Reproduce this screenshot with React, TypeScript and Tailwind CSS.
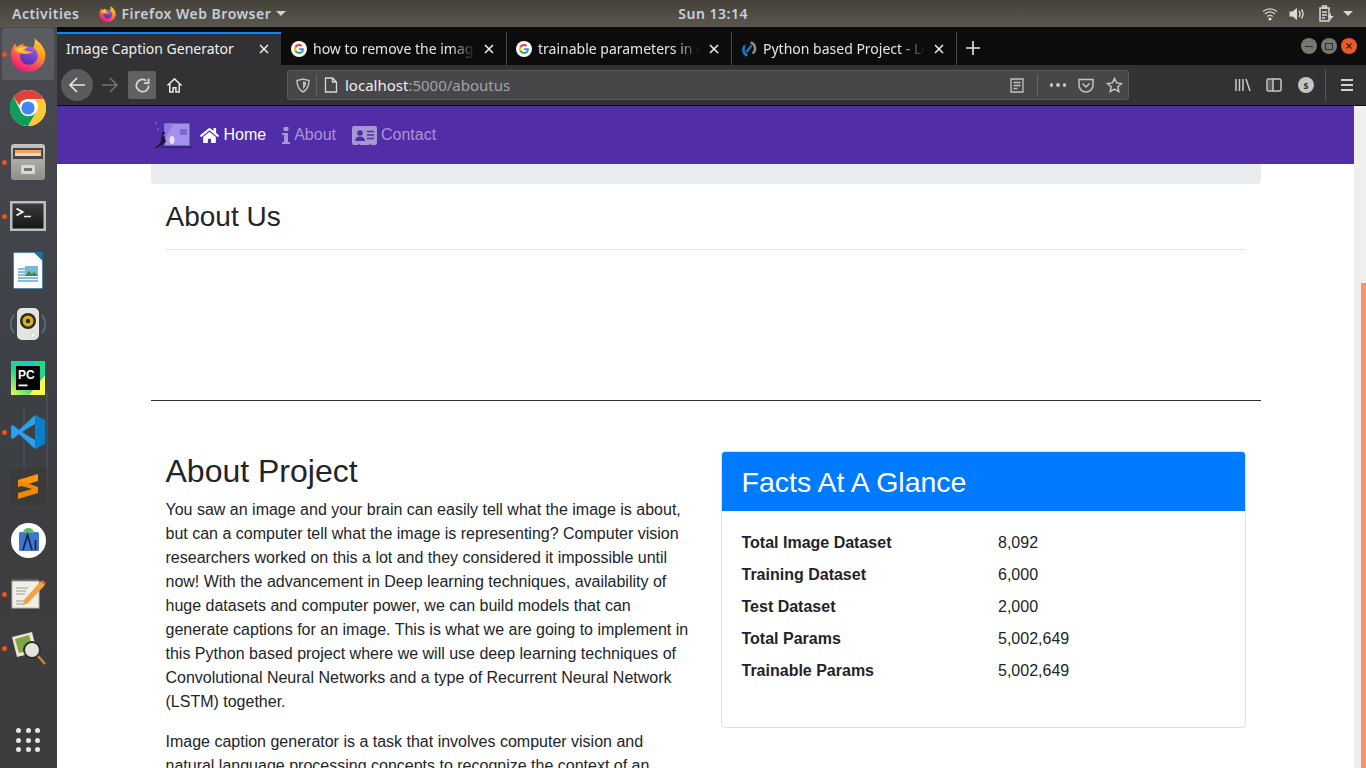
import type { ReactNode } from "react";
import { FaHome } from "react-icons/fa";

function FirefoxIcon({ size }: { size: number }) {
  const id = `ff${size}`;
  return (
    <svg width={size} height={size} viewBox="0 0 40 40">
      <defs>
        <linearGradient id={id} x1="0.8" y1="0" x2="0.3" y2="1">
          <stop offset="0" stopColor="#ffe03a" />
          <stop offset="0.4" stopColor="#ff9a1e" />
          <stop offset="0.75" stopColor="#ff3f5f" />
          <stop offset="1" stopColor="#e31587" />
        </linearGradient>
        <linearGradient id={`${id}g`} x1="0.7" y1="0" x2="0.3" y2="1">
          <stop offset="0" stopColor="#9a5cf0" />
          <stop offset="1" stopColor="#4f2ab0" />
        </linearGradient>
      </defs>
      <path
        d="M27 0c0 4 5 6 8 10 4 5 5 10 4 15-2 9-10 15-19 15C9 40 1 32 1 21c0-5 2-10 5-13 0 2 1 3 2 4 2-2 5-3 8-3-1 1-2 2-2 3 4-1 8 0 11 2 3-4 3-9 2-14z"
        fill={`url(#${id})`}
      />
      <circle cx="21" cy="22" r="10" fill={`url(#${id}g)`} />
      <path d="M4 15c5-4 11-5 16-3l-4 3c3 2 7 3 10 2-2 2-5 3-8 3-5 0-10-1-14-5z" fill="#ffa52a" />
      <path d="M7 15c3-2 7-3 10-2l-4 3c2 1 3 2 5 2-4 1-8 0-11-3z" fill="#ffd04a" />
    </svg>
  );
}

function ChromeIcon({ size }: { size: number }) {
  return (
    <svg width={size} height={size} viewBox="0 0 36 36">
      <circle cx="18" cy="18" r="18" fill="#fff" />
      <path d="M18 0a18 18 0 0 1 15.6 9H18a9 9 0 0 0-8.6 6.4L3.6 7A18 18 0 0 1 18 0z" fill="#db4437" />
      <path d="M33.6 9A18 18 0 0 1 18 36l7.8-13.5A9 9 0 0 0 25 10z" fill="#fcc934" />
      <path d="M3.6 7A18 18 0 0 0 18 36l7.8-13.5a9 9 0 0 1-15.6-2.4z" fill="#0f9d58" />
      <circle cx="18" cy="18" r="8.2" fill="#fff" />
      <circle cx="18" cy="18" r="6.6" fill="#4285f4" />
    </svg>
  );
}

function GoogleIcon() {
  return (
    <svg width="16" height="16" viewBox="0 0 16 16">
      <circle cx="8" cy="8" r="8" fill="#fff" />
      <path d="M12.9 8.2c0-.4 0-.7-.1-1H8v1.9h2.8c-.1.7-.5 1.2-1 1.6l1.6 1.2c.9-.9 1.5-2.2 1.5-3.7z" fill="#4285f4" />
      <path d="M8 13c1.3 0 2.5-.4 3.4-1.2l-1.6-1.2c-.5.3-1.1.5-1.8.5-1.3 0-2.4-.9-2.8-2L3.5 10.3A5 5 0 0 0 8 13z" fill="#34a853" />
      <path d="M5.2 9.1a3 3 0 0 1 0-2.1L3.5 5.7a5 5 0 0 0 0 4.5z" fill="#fbbc05" />
      <path d="M8 5c.7 0 1.4.3 1.9.7l1.4-1.4A5 5 0 0 0 3.5 5.7L5.2 7c.4-1.1 1.5-2 2.8-2z" fill="#ea4335" />
    </svg>
  );
}

function ProjectFavicon() {
  return (
    <svg width="16" height="16" viewBox="0 0 16 16" fill="none">
      <path d="M9.5 1.5a6.2 6.2 0 0 1 2 11" stroke="#8a8a8a" strokeWidth="2.6" />
      <path d="M6.5 14.5A6.2 6.2 0 0 1 4 4.5" stroke="#1b76c4" strokeWidth="2.6" />
      <path d="M10.5 4.5 5.5 11" stroke="#1b76c4" strokeWidth="2.4" />
    </svg>
  );
}

function Tab({ title, icon, active, wide }: { title: string; icon?: ReactNode; active?: boolean; wide?: boolean }) {
  let box = "flex h-[33px] w-[225px] items-center border-r border-[#4a4a4c] pl-[9px] pr-[11px] text-[#e4e4e4]";
  if (wide) box = "flex h-[33px] w-[226px] items-center border-r border-[#4a4a4c] pl-[10px] pr-[11px] text-[#e4e4e4]";
  if (active) box = "flex h-[33px] w-[224px] items-center border-t-2 border-[#0a84ff] bg-[#323234] pb-[2px] pl-[9px] pr-[11px] text-[#f0f0f0]";
  return (
    <div className={box}>
      {icon && <span className="mr-[6px] shrink-0">{icon}</span>}
      <span
        className={
          active
            ? "flex-1 overflow-hidden whitespace-nowrap text-[14px]"
            : "flex-1 overflow-hidden whitespace-nowrap text-[14px] [mask-image:linear-gradient(to_left,transparent,black_24px)]"
        }
      >
        {title}
      </span>
      <svg width="12" height="12" viewBox="0 0 12 12" className="ml-[8px] shrink-0">
        <path d="M2 2l8 8M10 2l-8 8" stroke="#f2f2f2" strokeWidth="1.5" />
      </svg>
    </div>
  );
}

function TopBar() {
  return (
    <div className="flex h-[27px] shrink-0 items-center bg-gradient-to-b from-[#45423b] to-[#5a574f] font-['Noto_Sans',sans-serif] text-[14px] font-semibold tracking-[0.5px] text-[#c6d0d8]">
      <span className="ml-[12px]">Activities</span>
      <span className="ml-[20px] mr-[5px]">
        <FirefoxIcon size={17} />
      </span>
      <span>Firefox Web Browser</span>
      <svg width="10" height="6" viewBox="0 0 10 6" className="ml-[5px]">
        <path d="M0 0h10L5 5z" fill="#d0d0d0" />
      </svg>
      <span className="ml-[392px]">Sun 13:14</span>
      <div className="ml-auto mr-[15px] flex items-center">
        <svg width="16" height="14" viewBox="0 0 16 14" fill="none" stroke="#cfcfcf" strokeWidth="1.3">
          <path d="M1 4.5C5 1 11 1 15 4.5M3 7c3-2.5 7-2.5 10 0M5.2 9.5c1.6-1.3 4-1.3 5.6 0" />
          <circle cx="8" cy="12" r="1.5" fill="#e8e8e8" stroke="none" />
        </svg>
        <svg width="16" height="14" viewBox="0 0 16 14" fill="none" className="ml-[11px]">
          <path d="M0.5 4.5h3L8 1v12L3.5 9.5h-3z" fill="#d8d8d8" />
          <path d="M10 4c1.2 1.7 1.2 4.3 0 6M12.5 2.5c1.9 2.7 1.9 6.3 0 9" stroke="#d8d8d8" strokeWidth="1.4" />
        </svg>
        <svg width="15" height="17" viewBox="0 0 15 17" fill="none" className="ml-[14px]">
          <path d="M1 3h9v13H1z" stroke="#d8d8d8" strokeWidth="1.5" />
          <path d="M3.5 1h4v2h-4zM3 7h5M3 10h5M3 13h3" stroke="#d8d8d8" strokeWidth="1.3" />
          <path d="M12 8l-3 4.5h2.5L10.5 16l4-5h-2.5z" fill="#e0e0e0" />
        </svg>
        <svg width="10" height="6" viewBox="0 0 10 6" className="ml-[9px] -mr-[2px]">
          <path d="M0 0h10L5 5z" fill="#d8d8d8" />
        </svg>
      </div>
    </div>
  );
}

function TabStrip() {
  return (
    <div className="flex h-[38px] shrink-0 items-end bg-[#0c0c0d] font-['Noto_Sans',sans-serif]">
      <Tab title="Image Caption Generator" active />
      <Tab title="how to remove the image" icon={<GoogleIcon />} wide />
      <Tab title="trainable parameters in c" icon={<GoogleIcon />} />
      <Tab title="Python based Project - Le" icon={<ProjectFavicon />} />
      <svg width="16" height="16" viewBox="0 0 16 16" className="mb-[9px] ml-[8px]">
        <path d="M8 1v14M1 8h14" stroke="#e8e8e8" strokeWidth="1.6" />
      </svg>
      <div className="mb-[11px] ml-auto mr-[9px] flex items-center gap-[4px]">
        <div className="flex h-[16px] w-[16px] items-center justify-center rounded-full bg-[#77776f]">
          <div className="h-px w-[8px] bg-[#2e2e2c]" />
        </div>
        <div className="flex h-[16px] w-[16px] items-center justify-center rounded-full bg-[#77776f]">
          <div className="h-[7px] w-[8px] border border-[#2e2e2c]" />
        </div>
        <div className="flex h-[16px] w-[16px] items-center justify-center rounded-full bg-[#e85a2a]">
          <svg width="8" height="8" viewBox="0 0 8 8">
            <path d="M1.5 1.5l5 5M6.5 1.5l-5 5" stroke="#4a1c0c" strokeWidth="1.2" />
          </svg>
        </div>
      </div>
    </div>
  );
}

function AddressField() {
  return (
    <div className="ml-[104px] flex h-[30px] w-[842px] shrink-0 items-center rounded-[3px] border border-[#59595b] bg-[#474749]">
      <div className="ml-[7px] flex w-[16px] justify-center">
        <svg width="14" height="15" viewBox="0 0 14 15" fill="none" stroke="#bdbdbe" strokeWidth="1.5">
          <path d="M1 2.5 7 1l6 1.5c0 5-1.5 9-6 11.5C2.5 11.5 1 7.5 1 2.5z" />
          <path d="M7 3v8c2-1.5 3-3.5 3.3-6.5z" fill="#bdbdbe" stroke="none" />
        </svg>
      </div>
      <div className="ml-[5px] h-[22px] w-px bg-[#656567]" />
      <svg width="14" height="16" viewBox="0 0 14 16" fill="none" stroke="#d8d8d8" strokeWidth="1.3" className="ml-[7px]">
        <path d="M1.5 1h7l4 4v10h-11zM8.5 1v4h4" />
      </svg>
      <span className="ml-[7px] text-[15px] text-[#eeeeee]">
        localhost<span className="text-[#a3a3a4]">:5000/aboutus</span>
      </span>
      <div className="ml-auto flex items-center">
        <svg width="14" height="15" viewBox="0 0 14 15" fill="none" stroke="#c4c4c5" strokeWidth="1.3">
          <path d="M1 1h12v13H1zM3.5 4.5h7M3.5 7.5h7M3.5 10.5h4" />
        </svg>
        <div className="ml-[13px] h-[22px] w-px bg-[#656567]" />
        <div className="ml-[12px] flex gap-[3px]">
          <div className="h-[3.5px] w-[3.5px] rounded-full bg-[#c4c4c5]" />
          <div className="h-[3.5px] w-[3.5px] rounded-full bg-[#c4c4c5]" />
          <div className="h-[3.5px] w-[3.5px] rounded-full bg-[#c4c4c5]" />
        </div>
        <svg width="16" height="15" viewBox="0 0 16 15" fill="none" stroke="#c4c4c5" strokeWidth="1.5" className="ml-[12px]">
          <path d="M1 1.5h14V7a7 7 0 0 1-14 0zM4.5 5.5 8 9l3.5-3.5" />
        </svg>
        <svg width="17" height="16" viewBox="0 0 17 16" fill="none" stroke="#c4c4c5" strokeWidth="1.5" className="ml-[12px] mr-[5px]">
          <path d="M8.5 1.5l2.1 4.4 4.9.6-3.600 3.300.9 4.800-4.300-2.400-4.300 2.400.9-4.800L1.500 6.500l4.900-.6z" />
        </svg>
      </div>
    </div>
  );
}

function BrowserActions() {
  return (
    <div className="ml-[106px] flex items-center">
      <svg width="16" height="14" viewBox="0 0 16 14" fill="none" stroke="#c9c9ca" strokeWidth="1.5">
        <path d="M1 1v12M4.5 1v12M8 1v12M11 1l4 12" />
      </svg>
      <svg width="16" height="14" viewBox="0 0 16 14" fill="none" stroke="#c9c9ca" strokeWidth="1.5" className="ml-[15px]">
        <rect x="1" y="1" width="14" height="12" rx="1.5" />
        <path d="M7 1v12" />
        <path d="M2 2h5v10H2z" fill="#c9c9ca" fillOpacity="0.25" stroke="none" />
      </svg>
      <div className="ml-[16px] flex h-[16px] w-[16px] items-center justify-center rounded-full bg-[#c4c4c5] text-[10px] font-bold text-[#323234]">
        s
      </div>
      <div className="ml-[11px] h-[32px] w-px bg-[#59595b]" />
      <div className="ml-[15px] flex flex-col gap-[3px]">
        <div className="h-[2px] w-[12px] bg-[#d0d0d0]" />
        <div className="h-[2px] w-[12px] bg-[#d0d0d0]" />
        <div className="h-[2px] w-[12px] bg-[#d0d0d0]" />
      </div>
    </div>
  );
}

function Toolbar() {
  return (
    <div className="flex h-[41px] shrink-0 items-center border-b border-[#0c0c0d] bg-[#323234] pl-[4px] font-['Noto_Sans',sans-serif]">
      <div className="flex h-[32px] w-[32px] items-center justify-center rounded-full bg-[#5b5b5d]">
        <svg width="18" height="18" viewBox="0 0 18 18" fill="none" stroke="#e6e6e6" strokeWidth="1.7">
          <path d="M17 9H2M9 2 2 9l7 7" />
        </svg>
      </div>
      <div className="ml-[3px] flex h-[28px] w-[28px] items-center justify-center">
        <svg width="18" height="18" viewBox="0 0 18 18" fill="none" stroke="#747476" strokeWidth="1.5">
          <path d="M1 9h15M9 2l7 7-7 7" />
        </svg>
      </div>
      <div className="ml-[4px] flex h-[28px] w-[28px] items-center justify-center rounded-[2px] bg-[#616163]">
        <svg width="17" height="17" viewBox="0 0 18 18" fill="none" stroke="#d8d8d8" strokeWidth="1.8">
          <path d="M15.5 9A6.5 6.5 0 1 1 13 3.9" />
          <path d="M15.5 1.5V6.5H10.5" />
        </svg>
      </div>
      <div className="ml-[9px] flex w-[18px] justify-center">
        <svg width="17" height="17" viewBox="0 0 18 18" fill="none" stroke="#e6e6e6" strokeWidth="1.6">
          <path d="M1.5 9 9 2l7.5 7M4 7.5V16h3.5v-4.5h3V16H14V7.5" />
        </svg>
      </div>
      <AddressField />
      <BrowserActions />
    </div>
  );
}

function DockItem({ children, dot, active }: { children: ReactNode; dot?: boolean; active?: boolean }) {
  return (
    <div
      className={
        active
          ? "relative mx-[2px] flex h-[52px] w-[52px] items-center justify-center rounded-[3px] bg-[#5a5c62]"
          : "relative mx-[2px] flex h-[52px] w-[52px] items-center justify-center"
      }
    >
      {dot && <div className="absolute left-[0px] top-[24px] h-[5px] w-[5px] rounded-full bg-[#e95420]" />}
      {children}
    </div>
  );
}

function Dock() {
  return (
    <div className="relative flex w-[57px] shrink-0 flex-col items-start gap-[2px] bg-gradient-to-b from-[#494a50] via-[#3c4045] via-50% to-[#3e3b3b] pt-[1px]">
      {/* faint wallpaper masts behind the dock */}
      <svg width="57" height="130" viewBox="0 0 57 130" className="absolute left-0 top-[360px]" fill="none">
        <path d="M24 20V100M47 5V100" stroke="#55565a" strokeWidth="1" />
      </svg>
      <DockItem dot active>
        <FirefoxIcon size={36} />
      </DockItem>
      <DockItem>
        <ChromeIcon size={36} />
      </DockItem>
      <DockItem dot>
        <svg width="36" height="38" viewBox="0 0 36 38">
          <defs>
            <linearGradient id="cab" x1="0" y1="0" x2="0" y2="1">
              <stop offset="0" stopColor="#c4c3bd" />
              <stop offset="1" stopColor="#8f8e89" />
            </linearGradient>
          </defs>
          <rect x="1" y="1" width="34" height="36" rx="3" fill="url(#cab)" />
          <rect x="3" y="5" width="30" height="11" fill="#4a4845" />
          <rect x="5" y="7" width="26" height="3" fill="#f0a35c" />
          <rect x="5" y="10" width="26" height="3" fill="#e8dcc8" />
          <rect x="11" y="22" width="14" height="9" rx="1" fill="#d8d7d2" />
          <rect x="14" y="25" width="8" height="3" fill="#77756f" />
        </svg>
      </DockItem>
      <DockItem dot>
        <svg width="36" height="30" viewBox="0 0 36 30" fill="none">
          <defs>
            <linearGradient id="term" x1="0" y1="0" x2="0" y2="1">
              <stop offset="0" stopColor="#3c3c3c" />
              <stop offset="1" stopColor="#161616" />
            </linearGradient>
          </defs>
          <rect x="0" y="0" width="36" height="30" fill="#bdbdbb" />
          <rect x="2.5" y="2.5" width="31" height="25" fill="url(#term)" />
          <path d="M6.5 7.5l6 3.5-6 3.5" stroke="#f0f0f0" strokeWidth="2" />
          <path d="M14 15.5h7" stroke="#f0f0f0" strokeWidth="1.5" />
        </svg>
      </DockItem>
      <DockItem>
        <svg width="30" height="37" viewBox="0 0 30 37">
          <path d="M0 0h22l8 8v29H0z" fill="#fdfdfd" stroke="#1d5e86" strokeWidth="1.5" />
          <path d="M21 0h9v9z" fill="#1d6fa0" />
          <path d="M5 17h11M5 20h10M5 23h10M5 26h20M5 29h20" stroke="#5fa8cf" strokeWidth="1.4" />
          <rect x="12" y="14" width="13" height="10" fill="#79b7d6" />
          <path d="M12 24l4-5 3 3 2-2 4 4z" fill="#3f8a4a" />
        </svg>
      </DockItem>
      <DockItem>
        <svg width="36" height="36" viewBox="0 0 36 36" fill="none">
          <path d="M4 9a14 14 0 0 0 0 18M32 9a14 14 0 0 1 0 18" stroke="#56687a" strokeWidth="2" />
          <rect x="7" y="2" width="22" height="32" rx="5" fill="#e4e4e0" />
          <circle cx="18" cy="15" r="8" fill="#2a2a28" />
          <circle cx="18" cy="15" r="5.5" fill="#d8b01c" />
          <circle cx="18" cy="15" r="2.2" fill="#2a2a28" />
          <circle cx="23" cy="29" r="2.5" fill="#f6f6f4" stroke="#c4c4c0" strokeWidth="0.8" />
        </svg>
      </DockItem>
      <DockItem>
        <svg width="34" height="34" viewBox="0 0 34 34">
          <defs>
            <linearGradient id="pc" x1="0" y1="1" x2="1" y2="0">
              <stop offset="0" stopColor="#fcf84a" />
              <stop offset="0.4" stopColor="#21d789" />
              <stop offset="1" stopColor="#07c3f2" />
            </linearGradient>
          </defs>
          <rect width="34" height="34" fill="url(#pc)" />
          <path d="M22 0h12v20z" fill="#21d789" />
          <path d="M34 14v20H18z" fill="#fcf84a" />
          <rect x="5" y="5" width="24" height="24" fill="#000" />
          <text x="7" y="18" fontSize="12" fontWeight="700" fill="#fff" fontFamily="Liberation Sans, sans-serif">
            PC
          </text>
          <rect x="7.5" y="23.5" width="9" height="1.8" fill="#fff" />
        </svg>
      </DockItem>
      <DockItem dot>
        <svg width="34" height="34" viewBox="0 0 34 34">
          <path d="M24 0l10 5v24l-10 5z" fill="#0a7fc9" />
          <path d="M24 0 8 15 2 10 0 11.5v11L2 24l6-5 16 15v-9L11 17l13-8z" fill="#2ba0ee" />
        </svg>
      </DockItem>
      <DockItem>
        <div className="flex h-[38px] w-[38px] items-center justify-center rounded-[3px] bg-[#3b3b3b]">
          <svg width="20" height="25" viewBox="0 0 20 25">
            <path d="M20 0v7L0 13V6z" fill="#ff9800" />
            <path d="M0 6l20 7v6L0 25v-6l14-4L0 11z" fill="#f08a00" />
          </svg>
        </div>
      </DockItem>
      <DockItem>
        <svg width="35" height="35" viewBox="0 0 35 35">
          <circle cx="17.5" cy="17.5" r="17.5" fill="#fff" />
          <rect x="8" y="9" width="20" height="19" rx="1.5" fill="#3f76d0" />
          <path d="M12 10a5.5 5 0 0 1 11 0z" fill="#5cb870" />
          <path d="M12 27l4.5-15L21 27" fill="none" stroke="#16294d" strokeWidth="1.8" />
          <path d="M24.5 17v10" stroke="#16294d" strokeWidth="1.8" />
        </svg>
      </DockItem>
      <DockItem dot>
        <svg width="36" height="32" viewBox="0 0 36 32">
          <rect x="2" y="3" width="27" height="27" fill="#efefe6" stroke="#b8b8ae" strokeWidth="1" />
          <path d="M2 2h27" stroke="#70706a" strokeWidth="2.5" strokeDasharray="1.5 1.5" />
          <path d="M6 10h12M6 13h10M6 16h9M6 23h12M6 26h8" stroke="#9a9a92" strokeWidth="1" />
          <path d="M31 3 14 22l-1 5 5-2L35 7z" fill="#f4a340" />
          <path d="M31 3l4 4 1-2-3-3z" fill="#e0524a" />
        </svg>
      </DockItem>
      <DockItem dot>
        <svg width="36" height="36" viewBox="0 0 36 36" fill="none">
          <path d="M2 7 22 2l5 20-20 5z" fill="#eae6cf" />
          <path d="M5 9l14-4 4 14-14 4z" fill="#7fa644" />
          <circle cx="22" cy="20" r="8" fill="#dfe5dc" stroke="#2d2d2d" strokeWidth="2" />
          <path d="M28 26l7 8" stroke="#d08a2e" strokeWidth="2.2" />
        </svg>
      </DockItem>
      <div className="mt-[52px] ml-[16px] grid grid-cols-3 gap-[4.5px]">
        {Array.from({ length: 9 }).map((_, i) => (
          <div key={i} className="h-[5px] w-[5px] rounded-full bg-[#e6e6e6]" />
        ))}
      </div>
    </div>
  );
}

function NavLogo() {
  return (
    <svg width="41" height="30" viewBox="0 0 41 30" className="shrink-0">
      <rect x="12" y="2" width="28" height="25" fill="#46388a" />
      <rect x="13.5" y="3.5" width="25" height="22" fill="#a58ff0" />
      <path d="M13.5 3.5h9L13.5 20z" fill="#8f78e4" />
      <rect x="29" y="9" width="7" height="6" fill="#7c6bc4" />
      <ellipse cx="21" cy="20" rx="2.5" ry="4" fill="#e8e4fa" />
      <rect x="10" y="26.5" width="31" height="1.5" fill="#2f2762" />
      <circle cx="12.5" cy="13" r="1.6" fill="#1f1a3a" />
      <path d="M11 15l2.5 1 1.5 6-4 3-6 3.5-1-1 5-4z" fill="#1f1a3a" />
      <circle cx="5" cy="3" r="0.8" fill="#a58ff0" />
      <circle cx="7" cy="9" r="0.8" fill="#a58ff0" />
    </svg>
  );
}

function InfoGlyph() {
  return (
    <svg width="8" height="17" viewBox="0 0 8 17" className="mr-[4px] shrink-0" fill="#a896d3">
      <rect x="1.5" y="0" width="5" height="4" rx="0.8" />
      <path d="M0 6h6v9h2v2H0v-2h2V8H0z" />
    </svg>
  );
}

function CardGlyph() {
  return (
    <svg width="25" height="19" viewBox="0 0 25 19" className="mr-[4px] shrink-0">
      <path
        d="M2 0h21a2 2 0 0 1 2 2v15a2 2 0 0 1-2 2h-4l-1-1.5-1 1.5H8l-1-1.5L6 19H2a2 2 0 0 1-2-2V2a2 2 0 0 1 2-2z"
        fill="#a896d3"
      />
      <circle cx="8" cy="7" r="2.8" fill="#512da8" />
      <path d="M3 15c0-3 2-4.5 5-4.5s5 1.5 5 4.5z" fill="#512da8" />
      <path d="M15 5.5h7M15 9h7M15 12.5h7" stroke="#512da8" strokeWidth="1.6" />
    </svg>
  );
}

const facts = [
  ["Total Image Dataset", "8,092"],
  ["Training Dataset", "6,000"],
  ["Test Dataset", "2,000"],
  ["Total Params", "5,002,649"],
  ["Trainable Params", "5,002,649"],
];

function Page() {
  return (
    <div className="h-full flex-1 overflow-hidden bg-white font-['Liberation_Sans',Arial,sans-serif] text-[16px] leading-[24px] text-[#212529]">
      <nav className="h-[58px] bg-[#512da8]">
        <div className="mx-auto flex h-full w-[1110px] items-center">
          <NavLogo />
          <a className="ml-[8px] flex items-center text-white">
            <FaHome className="mr-[5px] text-[19px]" />
            Home
          </a>
          <a className="ml-[16px] flex items-center text-[#a896d3]">
            <InfoGlyph />
            About
          </a>
          <a className="ml-[16px] flex items-center text-[#a896d3]">
            <CardGlyph />
            Contact
          </a>
        </div>
      </nav>
      <div className="mx-auto w-[1110px]">
        <div className="h-[20px] rounded-b-[4px] bg-[#e9ecef]" />
        <div className="px-[15px]">
          <h3 className="mt-[16px] mb-[15px] text-[28px] leading-[33.6px] font-normal">About Us</h3>
          <hr className="border-t border-[#e5e5e5]" />
        </div>
        <hr className="mt-[150px] border-t border-[#2e2e2e]" />
        <div className="mt-[50px] grid grid-cols-2 gap-x-[30px] px-[15px]">
          <div className="pt-[1px]">
            <h2 className="mb-[8px] text-[32px] leading-[38.4px] font-normal">About Project</h2>
            <p className="mb-[16px]">
              You saw an image and your brain can easily tell what the image is about, but can a computer tell what the
              image is representing? Computer vision researchers worked on this a lot and they considered it impossible
              until now! With the advancement in Deep learning techniques, availability of huge datasets and computer
              power, we can build models that can generate captions for an image. This is what we are going to implement
              in this Python based project where we will use deep learning techniques of Convolutional Neural Networks
              and a type of Recurrent Neural Network (LSTM) together.
            </p>
            <p>
              Image caption generator is a task that involves computer vision and natural language processing concepts
              to recognize the context of an image and describe them in a natural language like English.
            </p>
          </div>
          <div className="h-[277px] rounded-[4px] border border-[#dfdfdf]">
            <div className="flex h-[59px] items-center rounded-t-[3px] bg-[#007bff] px-[20px] pt-[1px] text-[28.5px] text-white">
              Facts At A Glance
            </div>
            <div className="px-[20px] pt-[16px]">
              {facts.map(([label, value]) => (
                <div key={label} className="grid h-[32px] grid-cols-[256.5px_1fr] items-center">
                  <span className="font-bold">{label}</span>
                  <span>{value}</span>
                </div>
              ))}
            </div>
          </div>
        </div>
      </div>
    </div>
  );
}

export default function App() {
  return (
    <div className="flex h-screen w-screen flex-col overflow-hidden">
      <TopBar />
      <div className="flex min-h-0 flex-1">
        <Dock />
        <div className="flex min-w-0 flex-1 flex-col">
          <TabStrip />
          <Toolbar />
          <div className="flex min-h-0 flex-1">
            <Page />
            <div className="flex h-full w-[12px] shrink-0 justify-end bg-[#f1efed]">
              <div className="mt-[177px] h-full w-[5px] bg-[#f4946d]" />
            </div>
          </div>
        </div>
      </div>
    </div>
  );
}
